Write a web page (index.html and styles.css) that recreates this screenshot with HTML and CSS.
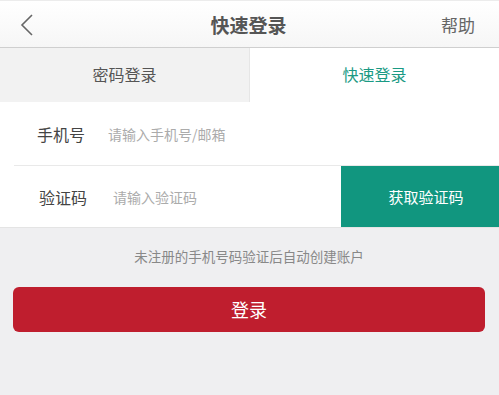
FILE: index.html
```html
<!DOCTYPE html>
<html lang="zh">
<head>
<meta charset="utf-8">
<title>快速登录</title>
<link rel="stylesheet" href="styles.css">
</head>
<body>
<div class="page">
  <header class="header">
    <span class="back">
      <svg width="14" height="22" viewBox="0 0 14 22"><path d="M12 1 L2 11 L12 21" fill="none" stroke="#666" stroke-width="1.6"/></svg>
    </span>
    <h1 class="title">快速登录</h1>
    <span class="help">帮助</span>
  </header>
  <nav class="tabs">
    <div class="tab">密码登录</div>
    <div class="tab active">快速登录</div>
  </nav>
  <form class="form">
    <div class="row row-phone">
      <label class="label">手机号</label>
      <span class="input">请输入手机号/邮箱</span>
    </div>
    <div class="row row-code">
      <label class="label">验证码</label>
      <span class="input">请输入验证码</span>
      <button type="button" class="code-btn">获取验证码</button>
    </div>
  </form>
  <section class="bottom">
    <p class="notice">未注册的手机号码验证后自动创建账户</p>
    <button type="button" class="login">登录</button>
  </section>
</div>
</body>
</html>
```
FILE: styles.css
```css
* { box-sizing: border-box; }
html, body { margin: 0; padding: 0; }
body {
  font-family: "Noto Sans CJK SC", "Noto Sans", sans-serif;
  background: #efeff1;
  width: 499px;
  height: 395px;
  overflow: hidden;
}
.page { display: flex; flex-direction: column; height: 395px; }
.header {
  height: 48px;
  display: flex;
  align-items: center;
  justify-content: space-between;
  padding: 0 24px 0 20px;
  background: linear-gradient(#ffffff, #f6f6f6);
  border-top: 1px solid #ececec;
  border-bottom: 1px solid #cfcfcf;
}
.back { display: flex; width: 60px; padding-top: 1px; }
.title {
  margin: 0;
  font-size: 19px;
  font-weight: bold;
  color: #555;
  line-height: 1;
  padding-left: 2px;
}
.help { width: 60px; text-align: right; font-size: 17px; color: #666; line-height: 1; }
.tabs { display: flex; height: 54px; background: #fff; }
.tab {
  flex: 1;
  display: flex;
  align-items: center;
  justify-content: center;
  font-size: 16px;
  color: #555;
  background: #f2f2f2;
  border-right: 1px solid #e6e6e6;
  padding-bottom: 2px;
}
.tab.active { background: #fff; color: #1a9a84; border-right: 0; }
.form { background: #fff; display: flex; flex-direction: column; }
.row { display: flex; align-items: center; }
.row-phone {
  height: 64px;
  margin-left: 14px;
  padding-left: 23px;
  border-bottom: 1px solid #e9e9e9;
}
.row-code { height: 62px; padding-left: 39px; border-bottom: 1px solid #e4e4e4; }
.label { font-size: 16px; color: #444; }
.row-phone .label { width: 71px; }
.row-code .label { width: 74px; }
.input { font-size: 14px; color: #ababab; flex: 1; }
.code-btn {
  align-self: stretch;
  width: 158px;
  border: 0;
  background: #11967f;
  color: #fff;
  font-family: inherit;
  font-size: 15px;
  padding: 0 0 0 12px;
}
.bottom { flex: 1; padding: 18px 14px 0 13px; display: flex; flex-direction: column; }
.notice { margin: 0; text-align: center; font-size: 13.5px; line-height: 20px; color: #888; }
.login {
  margin-top: 21px;
  height: 45px;
  border: 0;
  border-radius: 6px;
  background: #bf1e2e;
  color: #fff;
  font-family: inherit;
  font-size: 18px;
  padding-bottom: 2px;
}
```
